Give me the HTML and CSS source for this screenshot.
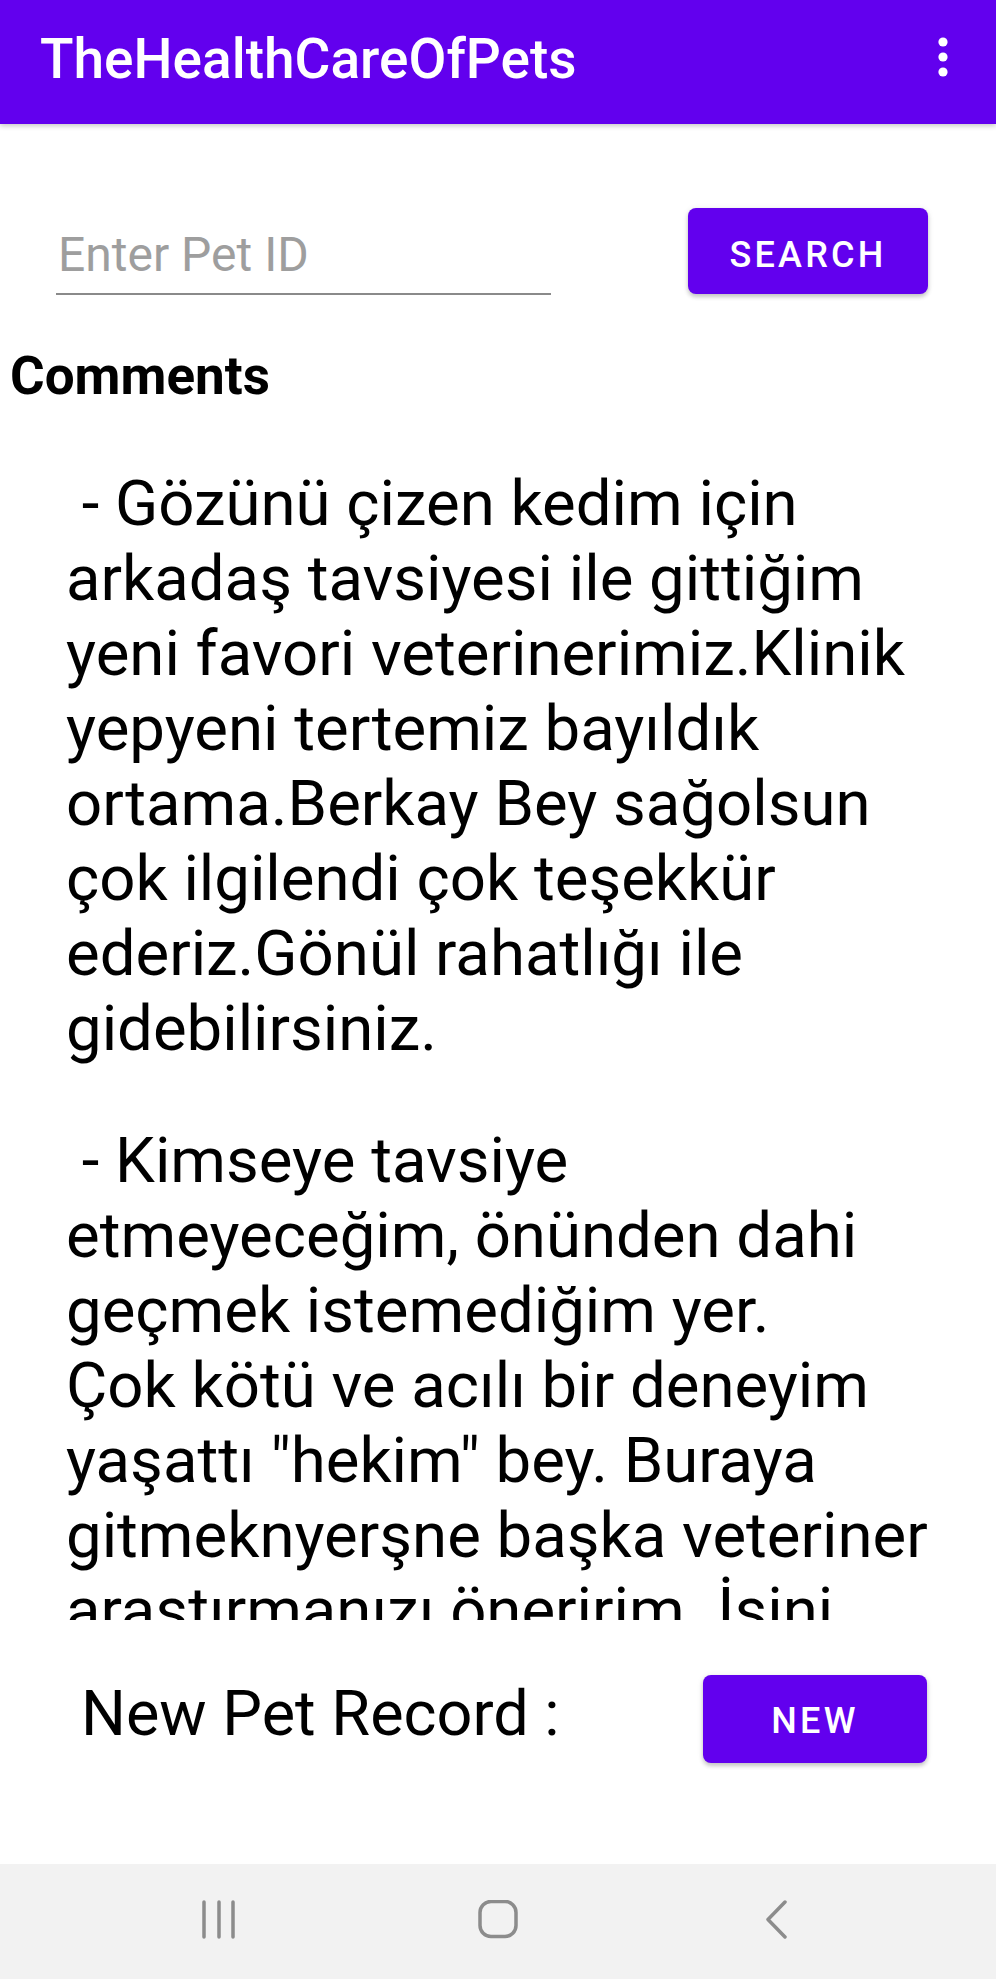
FILE: index.html
```html
<!DOCTYPE html>
<html lang="tr">
<head>
<meta charset="utf-8">
<title>TheHealthCareOfPets</title>
<link rel="stylesheet" href="styles.css">
</head>
<body>
<div class="app">
  <header class="appbar">
    <h1 class="title">TheHealthCareOfPets</h1>
    <button class="menu" aria-label="More options">
      <svg width="10" height="40" viewBox="0 0 10 40"><circle cx="5" cy="5" r="4.6"/><circle cx="5" cy="20" r="4.6"/><circle cx="5" cy="35" r="4.6"/></svg>
    </button>
  </header>
  <main class="content">
    <div class="search-row">
      <input class="pet-id" type="text" placeholder="Enter Pet ID">
      <button class="btn btn-search">SEARCH</button>
    </div>
    <h2 class="comments-title">Comments</h2>
    <div class="comments">
      <p class="comment"> - Gözünü çizen kedim için arkadaş tavsiyesi ile gittiğim yeni favori veterinerimiz.Klinik yepyeni tertemiz bayıldık ortama.Berkay Bey sağolsun çok ilgilendi çok teşekkür ederiz.Gönül rahatlığı ile gidebilirsiniz.</p>
      <p class="comment"> - Kimseye tavsiye etmeyeceğim, önünden dahi geçmek istemediğim yer.<br>Çok kötü ve acılı bir deneyim yaşattı "hekim" bey. Buraya gitmeknyerşne başka veteriner araştırmanızı öneririm. İşini</p>
    </div>
    <div class="new-row">
      <span class="new-label">New Pet Record :</span>
      <button class="btn btn-new">NEW</button>
    </div>
  </main>
  <nav class="navbar">
    <svg class="nav-icon" width="40" height="40" viewBox="0 0 40 40"><path d="M5 2v35M20 2v35M34 2v35"/></svg>
    <svg class="nav-icon" width="40" height="40" viewBox="0 0 40 40"><rect x="2" y="1.5" width="36" height="35" rx="11"/></svg>
    <svg class="nav-icon" width="40" height="40" viewBox="0 0 40 40"><path d="M28 2L11 19.5L28 37"/></svg>
  </nav>
</div>
</body>
</html>
```

FILE: styles.css
```css
* { box-sizing: border-box; }

body {
  margin: 0;
  font-family: Roboto, "Noto Sans", sans-serif;
  background: #ffffff;
  color: #000;
}

.app {
  display: flex;
  flex-direction: column;
  min-height: 100vh;
}

.appbar {
  height: 124px;
  background: #6200ee;
  display: flex;
  align-items: flex-start;
  padding-left: 40px;
  box-shadow: 0 2px 5px rgba(0, 0, 0, 0.22);
  position: relative;
  z-index: 1;
}

.title {
  margin: 27px 0 0;
  font-size: 55px;
  line-height: 64px;
  font-weight: 500;
  color: #ffffff;
}

.menu {
  margin: 37px 48px 0 auto;
  padding: 0;
  border: 0;
  background: none;
  line-height: 0;
}

.menu svg {
  display: block;
  fill: #ffffff;
}

.content {
  flex: 1;
  display: flex;
  flex-direction: column;
}

.search-row {
  display: flex;
  align-items: flex-start;
  padding: 84px 68px 0 56px;
}

.pet-id {
  width: 495px;
  height: 69px;
  margin-top: 18px;
  padding: 0 0 11px 2px;
  border: 0;
  border-bottom: 2px solid #8a8a8a;
  font-family: Roboto, "Noto Sans", sans-serif;
  font-size: 48px;
  color: #222;
  background: transparent;
  outline: none;
}

.pet-id::placeholder {
  color: #9e9e9e;
}

.btn {
  background: #6200ee;
  color: #ffffff;
  border: 0;
  border-radius: 8px;
  font-family: Roboto, "Noto Sans", sans-serif;
  font-weight: 500;
  font-size: 36px;
  letter-spacing: 0.09em;
  padding: 0;
  box-shadow: 0 3px 4px rgba(0, 0, 0, 0.18), 0 1px 6px rgba(0, 0, 0, 0.1);
}

.btn-search {
  margin-left: auto;
  width: 240px;
  height: 86px;
  padding-top: 7px;
}

.comments-title {
  margin: 50px 0 0 10px;
  font-size: 53px;
  line-height: 62px;
  font-weight: 700;
}

.comments {
  height: 1213px;
  overflow: hidden;
  padding: 59px 40px 0 66px;
}

.comment {
  margin: 0 0 57px;
  font-size: 63.5px;
  line-height: 75px;
  white-space: pre-wrap;
}

.new-row {
  display: flex;
  align-items: flex-start;
  padding: 55px 69px 0 81px;
}

.new-label {
  margin-top: 1px;
  font-size: 63px;
  line-height: 75px;
}

.btn-new {
  margin-left: auto;
  width: 224px;
  height: 88px;
  padding-top: 4px;
}

.navbar {
  height: 115px;
  background: #f2f2f2;
  display: flex;
  justify-content: center;
  align-items: flex-start;
  gap: 239px;
  padding-top: 36px;
}

.nav-icon {
  display: block;
  fill: none;
  stroke: #8c8c8c;
  stroke-width: 3.5;
  stroke-linecap: round;
  stroke-linejoin: round;
}
```
